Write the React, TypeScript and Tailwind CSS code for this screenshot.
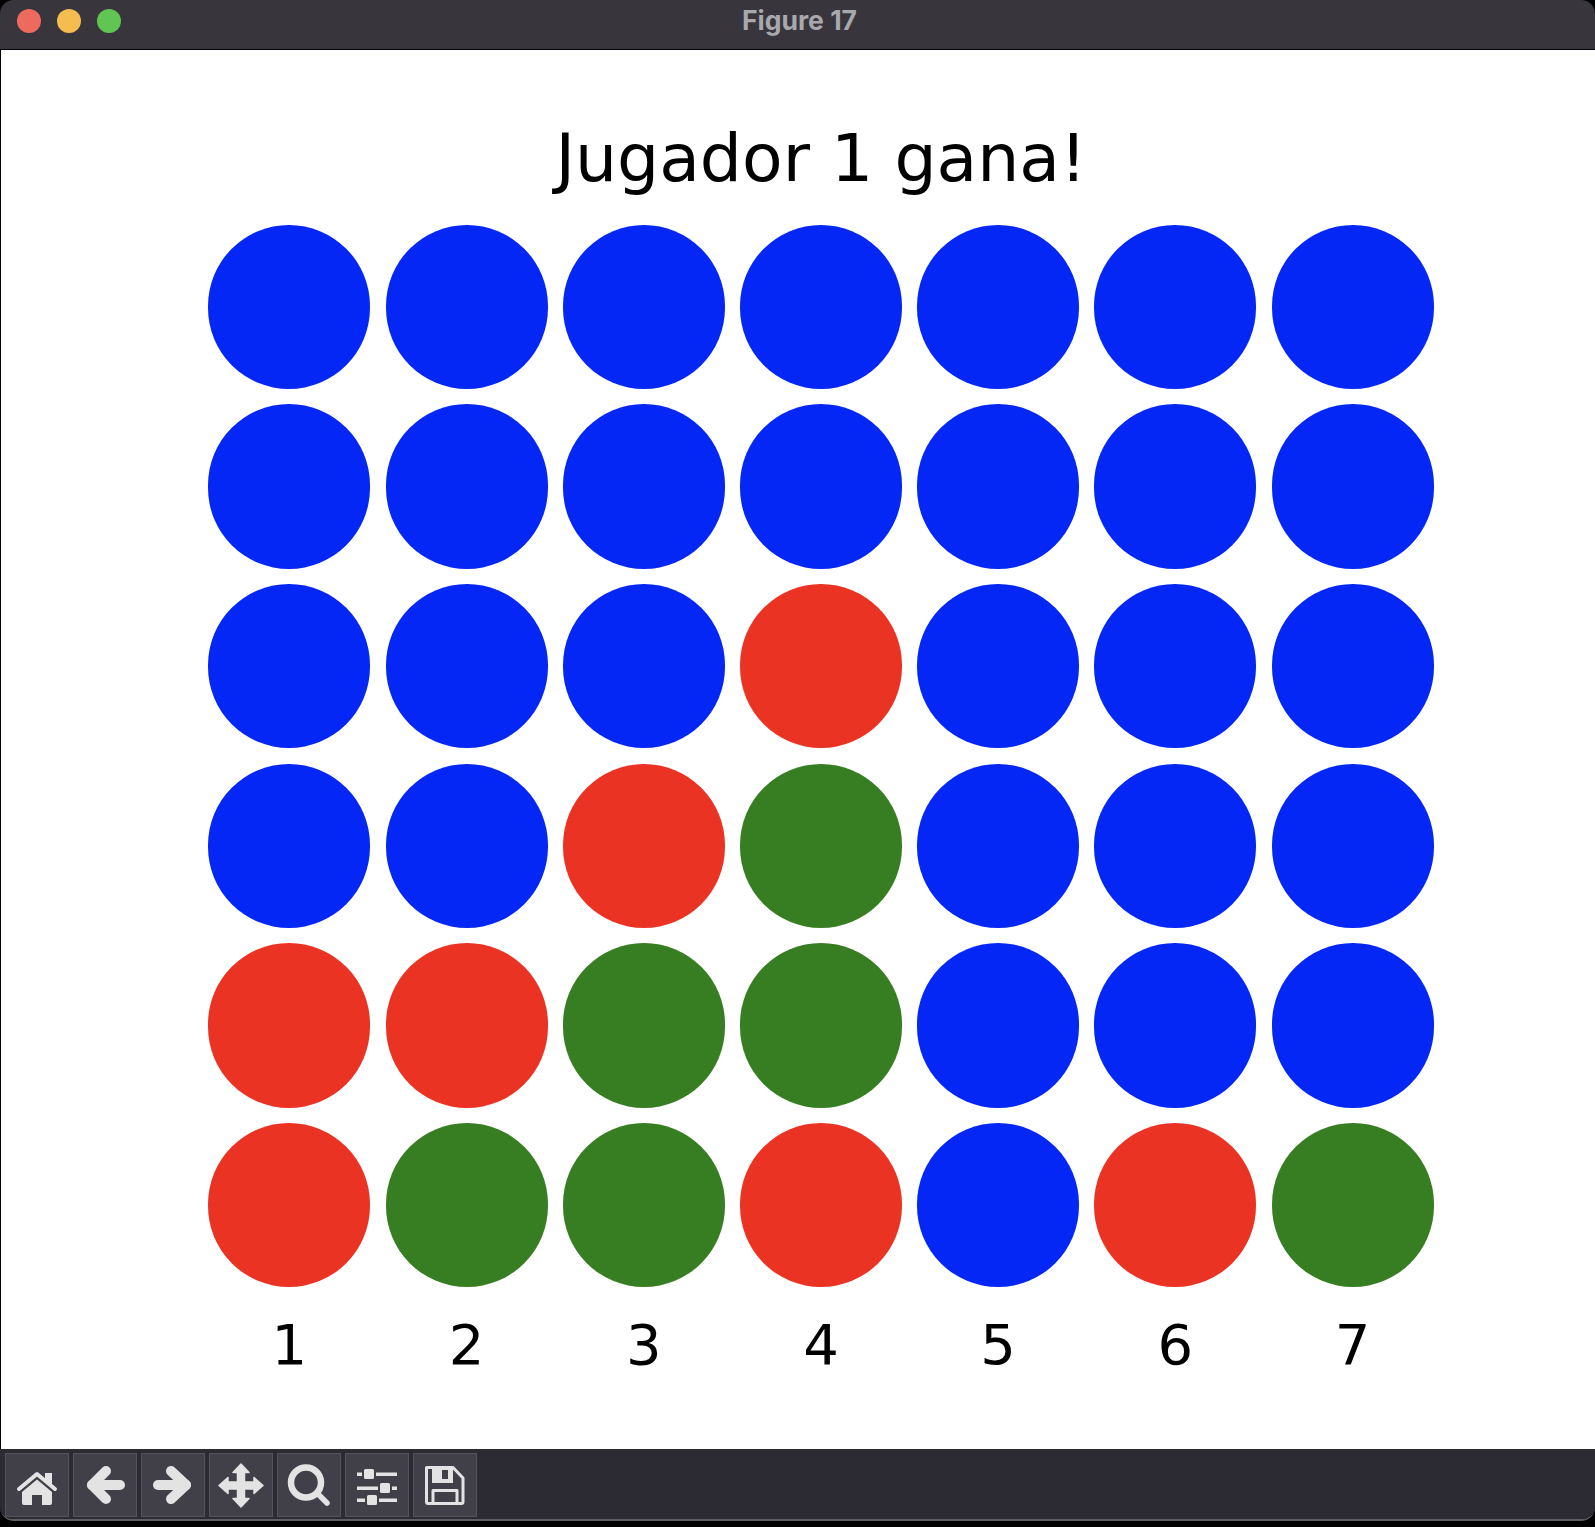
const board = [
  'bbbbbbb',
  'bbbbbbb',
  'bbbrbbb',
  'bbrgbbb',
  'rrggbbb',
  'rggrbrg',
];

const discColor: Record<string, string> = {
  b: 'bg-[#0527f6]',
  r: 'bg-[#eb3324]',
  g: 'bg-[#377d22]',
};

function HomeIcon() {
  return (
    <svg width="64" height="64" viewBox="0 0 64 64">
      <path d="M14 36 L32 21 L50 36" fill="none" stroke="#e3e3e3" strokeWidth="4" strokeLinecap="round" strokeLinejoin="round" />
      <path d="M40 20 H47 V32 L40 26 Z" fill="#e3e3e3" />
      <path d="M17 39 L32 26.5 L47 39 V50 Q47 52 45 52 H37 V42 H27 V52 H19 Q17 52 17 50 Z" fill="#e3e3e3" />
    </svg>
  );
}

function BackIcon() {
  return (
    <svg width="64" height="64" viewBox="0 0 64 64" fill="none" stroke="#e3e3e3" strokeWidth="10" strokeLinecap="round" strokeLinejoin="round">
      <path d="M19 32 H47" />
      <path d="M33 18 L19 32 L33 46" />
    </svg>
  );
}

function ForwardIcon() {
  return (
    <svg width="64" height="64" viewBox="0 0 64 64" fill="none" stroke="#e3e3e3" strokeWidth="10" strokeLinecap="round" strokeLinejoin="round">
      <path d="M17 32 H45" />
      <path d="M30 18 L45 32 L30 46" />
    </svg>
  );
}

function MoveIcon() {
  return (
    <svg width="64" height="64" viewBox="0 0 64 64">
      <path d="M32 11 L40 19.5 H35.5 V29 H45 V24.5 L54 32.5 L45 40.5 V36 H35.5 V45.5 H40 L32 54 L24 45.5 H28.5 V36 H19 V40.5 L10 32.5 L19 24.5 V29 H28.5 V19.5 H24 Z" fill="#e3e3e3" stroke="#e3e3e3" strokeWidth="1.5" strokeLinejoin="round" />
    </svg>
  );
}

function ZoomIcon() {
  return (
    <svg width="64" height="64" viewBox="0 0 64 64" fill="none" stroke="#e3e3e3" strokeLinecap="round">
      <circle cx="29" cy="29.5" r="15" strokeWidth="6.5" />
      <path d="M41 41 L50 50" strokeWidth="5.5" />
    </svg>
  );
}

function SlidersIcon() {
  return (
    <svg width="64" height="64" viewBox="0 0 64 64" fill="#e3e3e3" stroke="#413f47" strokeWidth="0">
      <rect x="12" y="19.5" width="40" height="3.5" />
      <rect x="12" y="33.5" width="40" height="3.5" />
      <rect x="12" y="45.5" width="40" height="3.5" />
      <rect x="18" y="15" width="12" height="12" rx="2.5" strokeWidth="2" />
      <rect x="34" y="29" width="12" height="12" rx="2.5" strokeWidth="2" />
      <rect x="21" y="41" width="12" height="12" rx="2.5" strokeWidth="2" />
    </svg>
  );
}

function SaveIcon() {
  return (
    <svg width="64" height="64" viewBox="0 0 64 64" fill="none" stroke="#e3e3e3" strokeWidth="3" strokeLinejoin="round">
      <path d="M13.5 14.5 H40 L50 25 V49 Q50 50.5 48.5 50.5 H15 Q13.5 50.5 13.5 49 Z" />
      <rect x="19" y="15" width="21" height="15" fill="#e3e3e3" stroke="none" />
      <rect x="29" y="17" width="6" height="9" fill="#413f47" stroke="none" />
      <path d="M20 51 V37.5 H44 V51" />
    </svg>
  );
}

const tools = [HomeIcon, BackIcon, ForwardIcon, MoveIcon, ZoomIcon, SlidersIcon, SaveIcon];

export default function App() {
  return (
    <div className="w-[1595px] h-[1527px] bg-black overflow-hidden">
      <div className="h-[1521px] flex flex-col overflow-hidden rounded-[14px] border-b-2 border-[#5f5d63]">
        <div className="relative h-[50px] shrink-0 flex items-center bg-[#38363c] border-b border-black pl-[17px] pb-2 gap-4">
          <div className="w-6 h-6 rounded-full bg-[#ee6a5f]" />
          <div className="w-6 h-6 rounded-full bg-[#f5bd4f]" />
          <div className="w-6 h-6 rounded-full bg-[#61c554]" />
          <div className="absolute left-[4px] right-0 top-0 h-[40px] leading-[40px] text-center text-[26.5px] font-bold text-[#a9a8ad] font-['Inter',sans-serif]">
            Figure 17
          </div>
        </div>

        <div className="flex-1 flex flex-col items-center bg-white border-l border-black font-['DejaVu_Sans',sans-serif] text-black">
          <div className="h-[174.5px] pt-[73px] text-[66.4px] leading-[70px] pl-[46px]">Jugador 1 gana!</div>
          <div className="grid grid-cols-[repeat(7,162px)] auto-rows-[164.5px] gap-x-[15.2px] gap-y-[15.2px] pl-[46px]">
            {board.join('').split('').map((cell, i) => (
              <div key={i} className={`rounded-full ${discColor[cell]}`} />
            ))}
          </div>
          <div className="grid grid-cols-[repeat(7,162px)] gap-x-[15.2px] pt-[27.5px] pl-[46px] text-[56px] leading-[60px] text-center">
            {[1, 2, 3, 4, 5, 6, 7].map(n => (
              <div key={n}>{n}</div>
            ))}
          </div>
        </div>

        <div className="h-[70px] shrink-0 flex items-center gap-1 pl-[5px] pt-[2px] bg-[#2c2a32]">
          {tools.map((Icon, i) => (
            <div key={i} className="w-16 h-16 bg-[#413f47] border border-[#55535a]">
              <div className="-m-px">
                <Icon />
              </div>
            </div>
          ))}
        </div>
      </div>
    </div>
  );
}
